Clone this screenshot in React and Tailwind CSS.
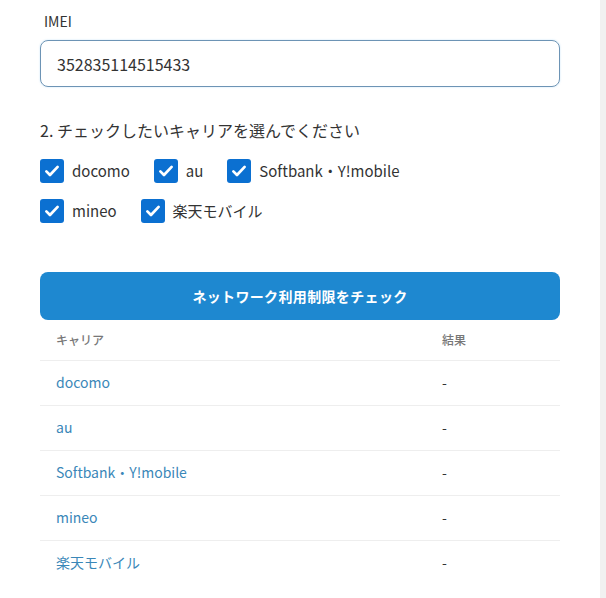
import { useState } from 'react'

const carriers = ['docomo', 'au', 'Softbank・Y!mobile', 'mineo', '楽天モバイル']

function Check({ label, checked, onChange }) {
  return (
    <label className="flex items-center gap-2 cursor-pointer">
      <span className={`w-6 h-6 rounded-[3px] flex items-center justify-center ${checked ? 'bg-[#0b70d1]' : 'border-2 border-gray-400 bg-white'}`}>
        {checked && (
          <svg viewBox="0 0 24 24" className="w-[18px] h-[18px]" fill="none" stroke="white" strokeWidth={3.6} strokeLinecap="round" strokeLinejoin="round">
            <path d="M4.5 12.5l4.8 4.8L19.5 6.5" />
          </svg>
        )}
      </span>
      <input type="checkbox" className="hidden" checked={checked} onChange={onChange} />
      <span className="text-[15px] text-[#333]">{label}</span>
    </label>
  )
}

export default function App() {
  const [imei, setImei] = useState('352835114515433')
  const [sel, setSel] = useState(carriers.map(() => true))

  const toggle = (i) => setSel(sel.map((v, j) => (j === i ? !v : v)))

  return (
    <div className="w-[606px] h-[598px] flex bg-white overflow-hidden font-['Noto_Sans_CJK_JP','Noto_Sans',sans-serif]">
      <div className="flex-1 pl-10 pr-10 pt-[11px]">
        {/* IMEI */}
        <div className="pl-1 text-[14px] text-[#333] leading-5">IMEI</div>
        <input
          value={imei}
          onChange={(e) => setImei(e.target.value)}
          className="mt-[9px] w-full h-[47px] rounded-lg border border-[#6d94b5] px-4 text-[16px] text-[#333] outline-none shadow-[0_0_2px_rgba(80,170,230,0.35)]"
        />

        {/* キャリア選択 */}
        <p className="mt-[33px] text-[16px] text-[#333] leading-5">2. チェックしたいキャリアを選んでください</p>
        <div className="mt-[19px] flex flex-wrap gap-x-[24px] gap-y-[16px] w-[420px]">
          {carriers.map((c, i) => (
            <Check key={c} label={c} checked={sel[i]} onChange={() => toggle(i)} />
          ))}
        </div>

        {/* ボタン */}
        <button className="mt-[49px] w-full h-12 rounded-lg bg-[#1e88d0] text-white text-[14px] font-bold tracking-wide">
          ネットワーク利用制限をチェック
        </button>

        {/* 結果 */}
        <table className="w-full text-left">
          <thead>
            <tr className="h-10 border-b border-[#eee]">
              <th className="pl-4 text-[12px] font-medium text-[#777]">キャリア</th>
              <th className="w-[118px] text-[12px] font-medium text-[#777]">結果</th>
            </tr>
          </thead>
          <tbody>
            {carriers.map((c) => (
              <tr key={c} className="h-[45px] border-b border-[#eee] last:border-b-0">
                <td className="pl-4 text-[14px] text-[#3a87b8]">{c}</td>
                <td className="text-[14px] text-[#333]">-</td>
              </tr>
            ))}
          </tbody>
        </table>
      </div>
      <div className="w-[6px] bg-[#f1f1f1]" />
    </div>
  )
}
